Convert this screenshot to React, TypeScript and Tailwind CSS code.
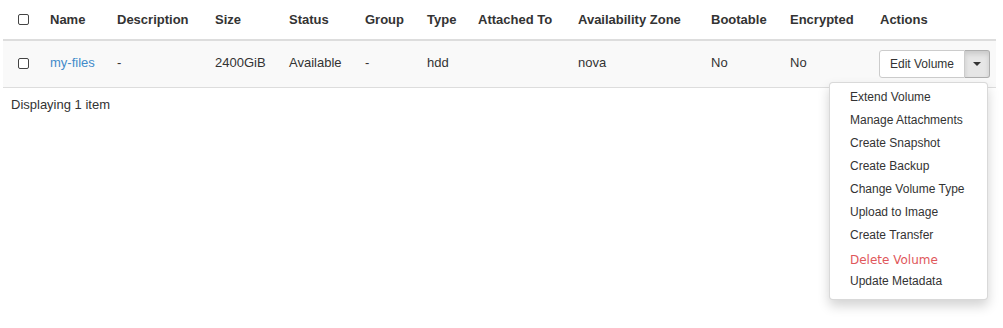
import React from "react";

const cols = [
  { label: "", w: 39 },
  { label: "Name", w: 67 },
  { label: "Description", w: 98 },
  { label: "Size", w: 74 },
  { label: "Status", w: 76 },
  { label: "Group", w: 62 },
  { label: "Type", w: 51 },
  { label: "Attached To", w: 100 },
  { label: "Availability Zone", w: 133 },
  { label: "Bootable", w: 79 },
  { label: "Encrypted", w: 90 },
  { label: "Actions", w: 124 },
];

function Box() {
  return <span className="inline-block w-[11px] h-[11px] border border-[#444] rounded-[2px] bg-white" />;
}

const items = [
  "Extend Volume",
  "Manage Attachments",
  "Create Snapshot",
  "Create Backup",
  "Change Volume Type",
  "Upload to Image",
  "Create Transfer",
  "Delete Volume",
  "Update Metadata",
];

export default function App() {
  const row = ["", "my-files", "-", "2400GiB", "Available", "-", "hdd", "", "nova", "No", "No"];
  return (
    <div className="w-[1003px] h-[328px] bg-white text-[#333] text-[13px] font-['Liberation_Sans',Arial,sans-serif] relative">
      <div className="pl-[3px] w-[996px]">
        <div className="flex h-[41px] items-center border-b-2 border-[#ddd] font-bold">
          {cols.map((c, i) => (
            <div key={i} style={{ width: c.w }} className={i === 0 ? "flex justify-center pl-[1px]" : "pl-[8px]"}>
              {i === 0 ? <Box /> : c.label}
            </div>
          ))}
        </div>
        <div className="flex h-[47px] items-center border-b border-[#ddd] bg-[#f9f9f9] pb-[2px]">
          {row.map((v, i) => (
            <div
              key={i}
              style={{ width: cols[i].w }}
              className={i === 0 ? "flex justify-center pl-[1px] pt-[1px]" : i === 1 ? "pl-[8px] text-[#428bca]" : "pl-[8px]"}
            >
              {i === 0 ? <Box /> : v}
            </div>
          ))}
          <div style={{ width: cols[11].w }} className="pl-[7px] relative text-[12px] mt-[2px]">
            <div className="flex h-[28px] w-[111px]">
              <div className="flex items-center justify-center w-[86px] border border-[#ccc] rounded-l-[3px] bg-white">
                Edit Volume
              </div>
              <div className="flex items-center justify-center w-[25px] border border-l-0 border-[#adadad] rounded-r-[3px] bg-[#e6e6e6] shadow-[inset_0_3px_5px_rgba(0,0,0,0.125)]">
                <span className="w-0 h-0 border-l-[4px] border-r-[4px] border-t-[4px] border-l-transparent border-r-transparent border-t-[#333]" />
              </div>
            </div>
            <div className="absolute top-[32px] left-[-43px] w-[159px] h-[218px] bg-white border border-[rgba(0,0,0,0.15)] rounded-[4px] shadow-[0_6px_12px_rgba(0,0,0,0.175)] pt-[2px] pb-[7px] z-10">
              {items.map((t) => (
                <div
                  key={t}
                  className={
                    t === "Delete Volume"
                      ? "h-[23px] pl-[20px] flex items-center pt-[5px] text-[#e0575b] font-['DejaVu_Sans',sans-serif] text-[12px]"
                      : "h-[23px] pl-[20px] flex items-center"
                  }
                >
                  {t}
                </div>
              ))}
            </div>
          </div>
        </div>
      </div>
      <div className="pl-[11px] pt-[7px]">Displaying 1 item</div>
    </div>
  );
}
